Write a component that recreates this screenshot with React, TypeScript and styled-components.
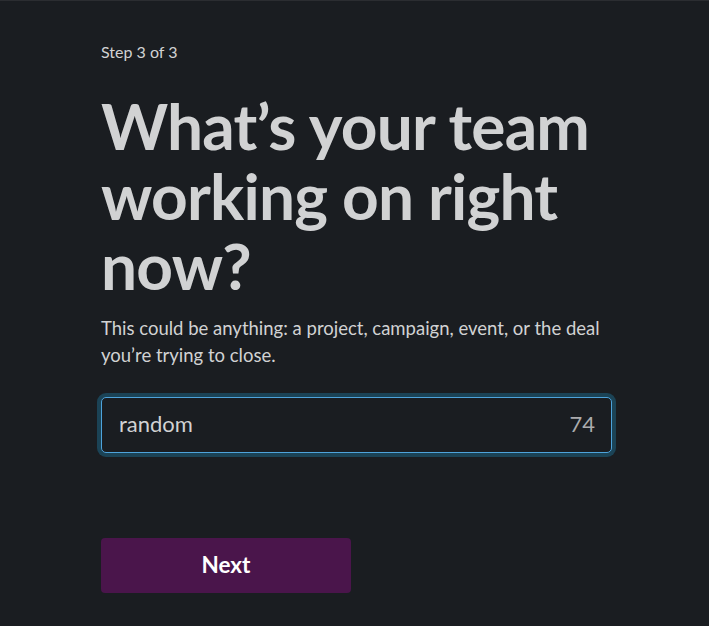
import React, { useState } from 'react';
import styled, { createGlobalStyle } from 'styled-components';

const GlobalStyle = createGlobalStyle`
  html, body {
    margin: 0;
    padding: 0;
    background: #1a1d21;
  }
  body {
    font-family: Lato, "Noto Sans", sans-serif;
    -webkit-font-smoothing: antialiased;
  }
`;

const Page = styled.div`
  box-sizing: border-box;
  min-height: 626px;
  border-top: 1px solid #2b2d31;
  padding: 41px 0 0 101px;
  color: #d1d2d3;
`;

const Column = styled.div`
  width: 510px;
  display: flex;
  flex-direction: column;
`;

const StepLabel = styled.div`
  font-size: 16px;
  line-height: 20px;
  color: #d1d2d3;
`;

const Title = styled.h1`
  margin: 29px 0 0;
  font-family: Lato, sans-serif;
  font-weight: 700;
  font-size: 64px;
  line-height: 70px;
  letter-spacing: -0.8px;
  color: #d1d2d3;
`;

const Lead = styled.p`
  margin: 14px 0 0;
  font-size: 18.5px;
  line-height: 27px;
  color: #d1d2d3;
`;

const Field = styled.label`
  box-sizing: border-box;
  margin-top: 28px;
  width: 511px;
  height: 56px;
  display: flex;
  align-items: center;
  padding: 0 16px 3px 17px;
  border: 1px solid #4ea3db;
  border-radius: 5px;
  box-shadow: 0 0 0 4px rgba(29, 155, 209, 0.3);
  background: #1a1d21;
`;

const Input = styled.input`
  flex: 1;
  min-width: 0;
  border: none;
  outline: none;
  background: transparent;
  font-family: Lato, sans-serif;
  font-size: 22px;
  color: #d1d2d3;
  padding: 0;
`;

const Counter = styled.span`
  font-size: 22px;
  color: #ababad;
`;

const NextButton = styled.button`
  margin-top: 85px;
  width: 250px;
  height: 55px;
  padding: 0 0 2px;
  border: none;
  border-radius: 4px;
  background: #4a154b;
  color: #ffffff;
  font-family: Lato, sans-serif;
  font-weight: 700;
  font-size: 22.5px;
  cursor: pointer;
`;

export default function App() {
  const [name, setName] = useState('random');

  return (
    <>
      <GlobalStyle />
      <Page>
        <Column>
          <StepLabel>Step 3 of 3</StepLabel>
          <Title>What’s your team working on right now?</Title>
          <Lead>
            This could be anything: a project, campaign, event, or the deal you’re trying to close.
          </Lead>
          <Field>
            <Input value={name} maxLength={80} onChange={(e) => setName(e.target.value)} />
            <Counter>{80 - name.length}</Counter>
          </Field>
          <NextButton>Next</NextButton>
        </Column>
      </Page>
    </>
  );
}
